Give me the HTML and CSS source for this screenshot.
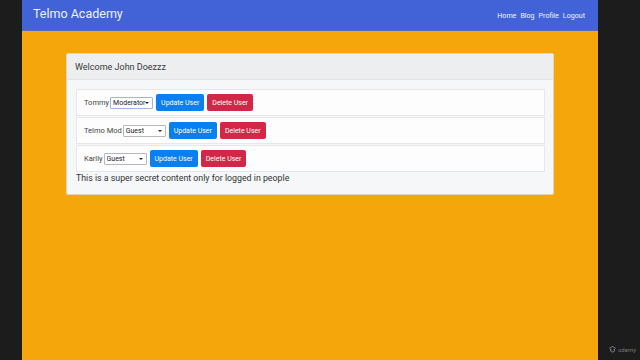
FILE: index.html
```html
<!DOCTYPE html>
<html lang="en">
<head>
  <meta charset="UTF-8">
  <meta name="viewport" content="width=device-width, initial-scale=1.0">
  <title>Telmo Academy</title>
  <link rel="stylesheet" href="styles.css">
</head>
<body>
  <div class="screen">
    <div class="page">
      <header class="navbar">
        <span class="brand">Telmo Academy</span>
        <nav class="links">
          <a href="#">Home</a>
          <a href="#">Blog</a>
          <a href="#">Profile</a>
          <a href="#">Logout</a>
        </nav>
      </header>

      <div class="card">
        <div class="card-header">Welcome John Doezzz</div>
        <div class="card-body">
          <!-- user list -->
          <div class="user-row">
            <span class="name">Tommy</span>
            <span class="select-wrap">
              <select class="role role-focus">
                <option>Moderator</option>
                <option>Guest</option>
              </select>
            </span>
            <button class="btn btn-update">Update User</button>
            <button class="btn btn-delete">Delete User</button>
          </div>
          <div class="user-row">
            <span class="name">Telmo Mod</span>
            <span class="select-wrap">
              <select class="role">
                <option>Guest</option>
                <option>Moderator</option>
              </select>
            </span>
            <button class="btn btn-update">Update User</button>
            <button class="btn btn-delete">Delete User</button>
          </div>
          <div class="user-row">
            <span class="name">Karlly</span>
            <span class="select-wrap">
              <select class="role">
                <option>Guest</option>
                <option>Moderator</option>
              </select>
            </span>
            <button class="btn btn-update">Update User</button>
            <button class="btn btn-delete">Delete User</button>
          </div>
          <p class="secret">This is a super secret content only for logged in people</p>
        </div>
      </div>
    </div>
    <div class="side">
      <span class="udemy">
        <svg width="7" height="7" viewBox="0 0 10 10"><path d="M5 0 L10 3 L10 4 L5 1.3 L0 4 L0 3 Z M1.5 4 L3.3 4 L3.3 7 Q5 9 6.7 7 L6.7 4 L8.5 4 L8.5 7 Q5 11.5 1.5 7 Z" fill="#777"/></svg>
        udemy
      </span>
    </div>
  </div>
</body>
</html>
```
FILE: styles.css
```css
body {
  margin: 0;
  background-color: #1c1c1c;
  font-family: 'Roboto', 'Liberation Sans', sans-serif;
  color: #333;
}
.screen {
  display: flex;
  height: 360px;
  padding-left: 22px;
}
.page {
  width: 576px;
  background-color: #f4a60a;
}
.side {
  flex: 1;
  display: flex;
  align-items: flex-end;
  justify-content: flex-end;
  padding: 0 4px 7px 0;
}
.udemy {
  display: flex;
  align-items: center;
  gap: 2px;
  font-size: 6px;
  color: #7a7a7a;
}
.navbar {
  display: flex;
  justify-content: space-between;
  align-items: center;
  height: 31px;
  padding: 0 13px 0 11px;
  background-color: #4263d8;
  border-bottom: 1px solid #5a6bb8;
  box-sizing: border-box;
}
.brand {
  font-size: 12.5px;
  color: #eef1ff;
  margin-top: -4px;
}
.links {
  display: flex;
  gap: 4px;
  margin-top: 1px;
}
.links a {
  color: #f2f4ff;
  font-size: 7.1px;
  text-decoration: none;
}
.card {
  margin: 22px 44px 0 44px;
  background-color: #f5f7f8;
  border: 1px solid #e2d6b8;
  border-radius: 2px;
  height: 142px;
  box-sizing: border-box;
}
.card-header {
  height: 25px;
  padding: 0 8px;
  display: flex;
  align-items: center;
  background-color: #eceeef;
  border-bottom: 1px solid #e1e3e5;
  font-size: 9px;
  color: #3a3a3a;
}
.card-body {
  padding: 9px 8px 0 9px;
}
.user-row {
  display: flex;
  align-items: center;
  height: 27px;
  padding-left: 7px;
  margin-bottom: 1px;
  background-color: #fdfdfd;
  border: 1px solid #e6e7e8;
  box-sizing: border-box;
}
.name {
  font-size: 7.5px;
  color: #444;
  margin-right: 1px;
}
.select-wrap {
  position: relative;
  display: flex;
  margin-right: 3px;
}
.select-wrap::after {
  content: '';
  position: absolute;
  right: 4px;
  top: 5px;
  border-left: 2px solid transparent;
  border-right: 2px solid transparent;
  border-top: 2.5px solid #222;
  pointer-events: none;
}
.role {
  appearance: none;
  -webkit-appearance: none;
  width: 43px;
  height: 12px;
  padding: 0 0 0 2px;
  font-family: 'Roboto', 'Liberation Sans', sans-serif;
  font-size: 7px;
  line-height: 10px;
  color: #222;
  background-color: #fff;
  border: 1px solid #b8b8b8;
  border-radius: 1px;
}
.role-focus {
  border-color: #9fb6dc;
}
.btn {
  height: 17px;
  padding: 0 5px;
  margin-right: 3px;
  border: none;
  border-radius: 2px;
  color: #fff;
  font-family: 'Roboto', 'Liberation Sans', sans-serif;
  font-size: 7px;
}
.btn-update {
  background-color: #0a7ff2;
}
.btn-delete {
  background-color: #d22747;
}
.secret {
  margin: 1px 0 0 0;
  font-size: 8.8px;
  color: #333;
}
```
